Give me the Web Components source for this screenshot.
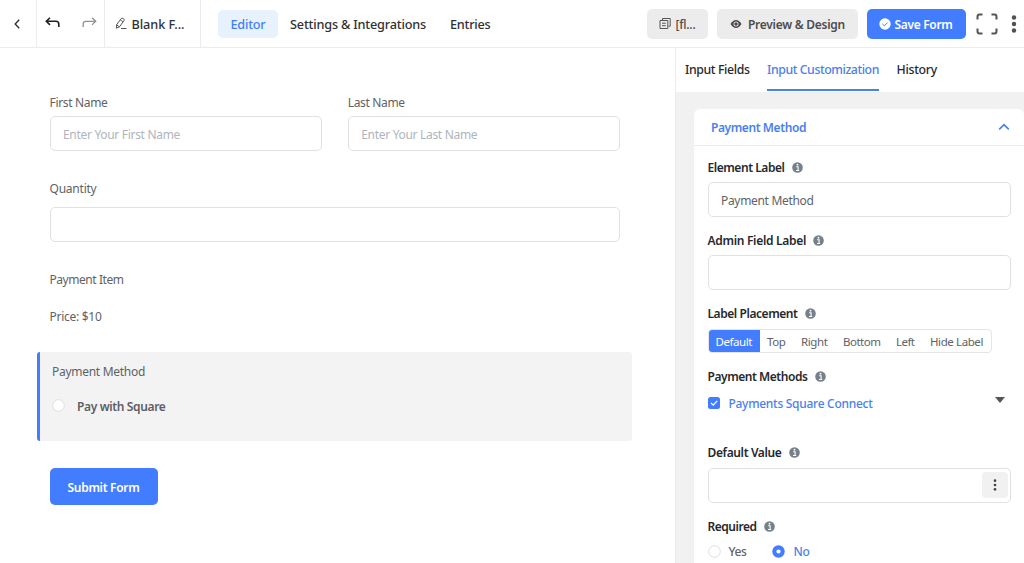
<!DOCTYPE html>
<html lang="en">
<head>
<meta charset="utf-8">
<title>Form Editor</title>
<style>
html,body{margin:0;height:100%;overflow:hidden;background:#fff}
body{font-family:"Noto Sans","Open Sans",sans-serif;font-size:12px;color:#606266}
</style>
</head>
<body>
<form-editor></form-editor>
<script>
const define = (name, html, setup) => customElements.define(name, class extends HTMLElement {
  connectedCallback() {
    if (this.shadowRoot) return;
    const t = document.createElement('template');
    t.innerHTML = html;
    this.attachShadow({mode: 'open'}).append(t.content.cloneNode(true));
    if (setup) setup(this, this.shadowRoot);
  }
});

/* One line of text tracked to occupy the given width. */
define('ui-text', `<style>:host{display:block;flex:none;height:18px;line-height:19px;white-space:nowrap}
span{display:inline-block;white-space:pre}</style><span></span>`, (el, root) => {
  const s = root.querySelector('span'), w = +el.getAttribute('w');
  s.textContent = el.getAttribute('text');
  el.style.width = w + 'px';
  s.style.letterSpacing = (w - s.getBoundingClientRect().width) / s.textContent.length + 'px';
});

const icons = {
  back: [8,10,'<path d="M6.200 .8 2.200 5l4 4.200" fill="none" stroke="#303133" stroke-width="1.400"/>'],
  undo: [16,12,'<path d="M5 .7 1.300 4.300 5 7.900M1.500 4.300H11q2.800 0 2.800 2.800V10" fill="none" stroke="#222" stroke-width="1.600"/>'],
  redo: [16,12,'<path d="M11 .7l3.700 3.600L11 7.900M14.500 4.300H5q-2.800 0-2.800 2.800V10" fill="none" stroke="#909090" stroke-width="1.300"/>'],
  edit: [12,13,'<path d="M1.300 11.200 1.600 7.800 6.200 1.500Q7 .7 8 1.400L8.800 2Q9.600 2.700 9 3.600L4.400 9.900ZM5.300 2.800 7.900 4.700M1.600 7.800 4.400 9.900M6 11.500h5.500" fill="none" stroke="#555" stroke-width="1"/>'],
  copy: [12,13,'<path d="M3.500 3V1.500h7.700v7.700H9.500M1 3.500h7.800v8H1ZM3 6.200h3.800M3 8.700h3.800" fill="none" stroke="#555" stroke-width="1"/>'],
  eye: [12,10,'<path d="M.5 5Q3 1 6 1t5.500 4Q9 9 6 9T.500 5Z" fill="#4b4b4b"/><circle cx="6" cy="5" r="2.500" fill="#ececec"/><circle cx="6" cy="5" r="1.700" fill="#4b4b4b"/>'],
  save: [12,12,'<circle cx="6" cy="6" r="5.700" fill="#fff"/><path d="m3.500 6 1.900 1.800 3.200-3.300" fill="none" stroke="#427dff" stroke-width="1"/>'],
  full: [22,22,'<path d="M1.500 6.500v-3q0-2 2-2h3M15.500 1.500h3q2 0 2 2v3M20.500 15.500v3q0 2-2 2h-3M6.500 20.500h-3q-2 0-2-2v-3" fill="none" stroke="#555" stroke-width="2"/>'],
  more: [6,20,'<g fill="#505050"><circle cx="3" cy="3.500" r="2.200"/><circle cx="3" cy="10" r="2.200"/><circle cx="3" cy="16.500" r="2.200"/></g>'],
  dots: [4,12,'<g fill="#444"><circle cx="2" cy="1.700" r="1.350"/><circle cx="2" cy="6" r="1.350"/><circle cx="2" cy="10.300" r="1.350"/></g>'],
  info: [11,11,'<circle cx="5.500" cy="5.500" r="5.300" fill="#76808b"/><path d="M4.200 4.700h1.900v3.500M4 8.500h3.200" fill="none" stroke="#fff" stroke-width="1.100"/><circle cx="5.500" cy="2.700" r=".9" fill="#fff"/>'],
  up: [12,8,'<path d="m1.200 6.400 4.800-4.700 4.800 4.700" fill="none" stroke="#4a80ee" stroke-width="1.700"/>'],
  down: [10,6,'<path d="M0 0h10L5 6Z" fill="#555"/>'],
  radio: [13,13,'<circle cx="6.500" cy="6.500" r="5.800" fill="#fff" stroke="#dcdee3"/>'],
  radioOn: [13,13,'<circle cx="6.500" cy="6.500" r="6.200" fill="#427dff"/><circle cx="6.500" cy="6.500" r="2.100" fill="#fff"/>'],
  check: [12,12,'<rect width="12" height="12" rx="2.500" fill="#427dff"/><path d="m3 6 2.200 2.200L9.200 3.800" fill="none" stroke="#fff" stroke-width="1.200"/>']
};
define('ui-icon', `<style>:host{display:block;flex:none}svg{display:block}</style><div></div>`, (el, root) => {
  const [w, h, body] = icons[el.getAttribute('name')];
  root.querySelector('div').innerHTML = `<svg width="${w}" height="${h}" viewBox="0 0 ${w} ${h}">${body}</svg>`;
});

define('ui-box', `<style>:host{display:flex;align-items:center;box-sizing:border-box;height:35px;border:1px solid #dfe1e5;border-radius:5px;background:#fff;padding:0 2.500px 0 12.500px}</style><slot></slot>`);

define('ui-button', `<style>:host{display:flex;flex:none;align-items:center;box-sizing:border-box;height:30px;border-radius:5px;background:#ececec;color:#4d4d4d;font-weight:600}
:host([primary]){background:#427dff;color:#fff}</style><slot></slot>`);

define('field-label', `<style>:host{display:flex;align-items:center;height:18px;color:#25282e;font-weight:600}
ui-icon{margin:1px 0 0 7px}</style><slot></slot><ui-icon name="info"></ui-icon>`);

define('top-bar', `<style>
:host{display:flex;align-items:center;height:47px;border-bottom:1px solid #ececec;color:#303133;font-weight:500;font-size:12.700px}
.cell{display:flex;align-items:center;height:47px;box-sizing:border-box;border-right:1px solid #ececec}
.a{width:37px;padding-left:13px}.b{width:68px;padding-left:8px;gap:20px}.b ui-icon{margin-top:-1px}.c{width:96px;padding-left:9.500px;gap:5px}
.nav{display:flex;align-items:center;flex:1}
.on{display:flex;align-items:center;height:28px;width:60px;box-sizing:border-box;padding-left:12.500px;margin-left:17px;border-radius:5px;background:#e8f2ff;color:#427dff}
ui-button{font-size:12px}
</style>
<div class="cell a"><ui-icon name="back"></ui-icon></div>
<div class="cell b"><ui-icon name="undo"></ui-icon><ui-icon name="redo"></ui-icon></div>
<div class="cell c"><ui-icon name="edit"></ui-icon><ui-text text="Blank F..." w="53"></ui-text></div>
<div class="nav"><div class="on"><ui-text text="Editor" w="35"></ui-text></div>
<ui-text style="margin-left:12px" text="Settings &amp; Integrations" w="136"></ui-text>
<ui-text style="margin-left:24px" text="Entries" w="40.500"></ui-text></div>
<ui-button style="width:61px;padding-left:12px;gap:4.500px;font-weight:500"><ui-icon name="copy"></ui-icon><ui-text text="[fl..." w="20"></ui-text></ui-button>
<ui-button style="width:141px;margin-left:8.500px;padding-left:13.500px;gap:6px"><ui-icon name="eye"></ui-icon><ui-text text="Preview &amp; Design" w="97"></ui-text></ui-button>
<ui-button primary style="width:99px;margin-left:9px;padding-left:12.500px;gap:3.500px"><ui-icon name="save"></ui-icon><ui-text text="Save Form" w="58"></ui-text></ui-button>
<ui-icon name="full" style="margin:1px 0 0 10px"></ui-icon>
<ui-icon name="more" style="margin:1px 7.500px 0 13px"></ui-icon>`);

define('form-canvas', `<style>
:host{display:block;width:675px;box-sizing:border-box;padding:45px 55px 0 49.500px;background:#fff}
.names{display:flex;gap:26px}.names>div{flex:1}.names ui-box{color:#b0b4bd}
.sel{margin:27px -12px 0 -12.500px;height:89px;box-sizing:border-box;border-left:3px solid #427dff;border-radius:3px;background:#f3f3f3;padding:10px 0 0 12px}
.opt{display:flex;align-items:center;gap:12px;margin-top:16.500px;font-weight:600}
.opt ui-text{color:#5c5f66}.opt ui-icon{margin-top:-1px}
ui-button{width:108px;height:37px;margin-top:27px;padding-left:18px}
</style>
<div class="names">
<div><ui-text text="First Name" w="58"></ui-text><ui-box style="margin-top:5px"><ui-text text="Enter Your First Name" w="117"></ui-text></ui-box></div>
<div><ui-text text="Last Name" w="57"></ui-text><ui-box style="margin-top:5px"><ui-text text="Enter Your Last Name" w="116"></ui-text></ui-box></div>
</div>
<ui-text style="margin-top:28px" text="Quantity" w="47"></ui-text>
<ui-box style="margin-top:10px"></ui-box>
<ui-text style="margin-top:28px" text="Payment Item" w="74"></ui-text>
<ui-text style="margin-top:19px" text="Price: $10" w="52"></ui-text>
<div class="sel"><ui-text text="Payment Method" w="93"></ui-text>
<div class="opt"><ui-icon name="radio"></ui-icon><ui-text text="Pay with Square" w="88.500"></ui-text></div></div>
<ui-button primary><ui-text text="Submit Form" w="72"></ui-text></ui-button>`);

define('label-placement', `<style>
:host{display:flex;box-sizing:border-box;width:284px;height:24px;border:1px solid #e3e5e9;border-radius:4px;font-size:11.500px;overflow:hidden;align-items:center;gap:15.500px}
.on{display:flex;align-items:center;height:24px;width:51px;margin-right:-8px;padding-left:7px;box-sizing:border-box;background:#427dff;color:#fff}
</style><div class="on"><ui-text text="Default" w="36.500"></ui-text></div>
<ui-text text="Top" w="18.500"></ui-text><ui-text text="Right" w="26.500"></ui-text><ui-text text="Bottom" w="37.500"></ui-text><ui-text text="Left" w="18.500"></ui-text><ui-text text="Hide Label" w="53"></ui-text>`);

define('side-panel', `<style>
:host{display:block;flex:1;border-left:1px solid #ececec;background:#f1f1f1;overflow:hidden}
.tabs{display:flex;gap:17.500px;height:43.500px;background:#fff;padding-left:9px;color:#25282e;font-weight:500;font-size:12.300px}
.tabs ui-text{padding-top:12px;height:31px;box-sizing:border-box}
.tabs>div{box-sizing:border-box;height:43px}
.tabs .on{color:#4a80ee;border-bottom:2px solid #4a80ee}
.card{margin:17.500px 0 0 18px;background:#fff;border-radius:6px;height:500px}
.head{display:flex;align-items:center;justify-content:space-between;height:36px;border-bottom:1px solid #ececec;padding:0 14px 0 17px;color:#4a80ee;font-weight:600}
.body{padding:12px 13px 0 13.500px}
.row{display:flex;align-items:center;height:18px}
.kebab{display:flex;align-items:center;justify-content:center;margin-left:auto;width:26px;height:26px;border-radius:4px;background:#f1f1f1}
</style>
<div class="tabs"><div><ui-text text="Input Fields" w="64.500"></ui-text></div><div class="on"><ui-text text="Input Customization" w="112"></ui-text></div><div><ui-text text="History" w="40.500"></ui-text></div></div>
<div class="card">
<div class="head"><ui-text text="Payment Method" w="95"></ui-text><ui-icon name="up"></ui-icon></div>
<div class="body">
<field-label><ui-text text="Element Label" w="77"></ui-text></field-label>
<ui-box style="margin-top:6px"><ui-text text="Payment Method" w="92.500"></ui-text></ui-box>
<field-label style="margin-top:14px"><ui-text text="Admin Field Label" w="98.500"></ui-text></field-label>
<ui-box style="margin-top:6px"></ui-box>
<field-label style="margin-top:14px"><ui-text text="Label Placement" w="90"></ui-text></field-label>
<label-placement style="margin-top:7px"></label-placement>
<field-label style="margin-top:14px"><ui-text text="Payment Methods" w="100"></ui-text></field-label>
<div class="row" style="margin-top:9px;color:#4a80ee;font-weight:500"><ui-icon name="check"></ui-icon><ui-text style="margin-left:9px" text="Payments Square Connect" w="144"></ui-text><ui-icon name="down" style="margin:-6px 6px 0 auto"></ui-icon></div>
<field-label style="margin-top:31px"><ui-text text="Default Value" w="74"></ui-text></field-label>
<ui-box style="margin-top:6.500px"><div class="kebab"><ui-icon name="dots"></ui-icon></div></ui-box>
<field-label style="margin-top:14px"><ui-text text="Required" w="49"></ui-text></field-label>
<div class="row" style="margin-top:7.500px;font-weight:500"><ui-icon name="radio"></ui-icon><ui-text style="margin-left:8px" text="Yes" w="18"></ui-text><ui-icon name="radioOn" style="margin-left:25px"></ui-icon><ui-text style="margin-left:9px;color:#4a80ee" text="No" w="16"></ui-text></div>
</div></div>`);

define('form-editor', `<style>:host{display:flex;flex-direction:column;width:1024px;height:563px;overflow:hidden}.main{display:flex;flex:1;min-height:0}</style>
<top-bar></top-bar><div class="main"><form-canvas></form-canvas><side-panel></side-panel></div>`);
</script>
</body>
</html>
